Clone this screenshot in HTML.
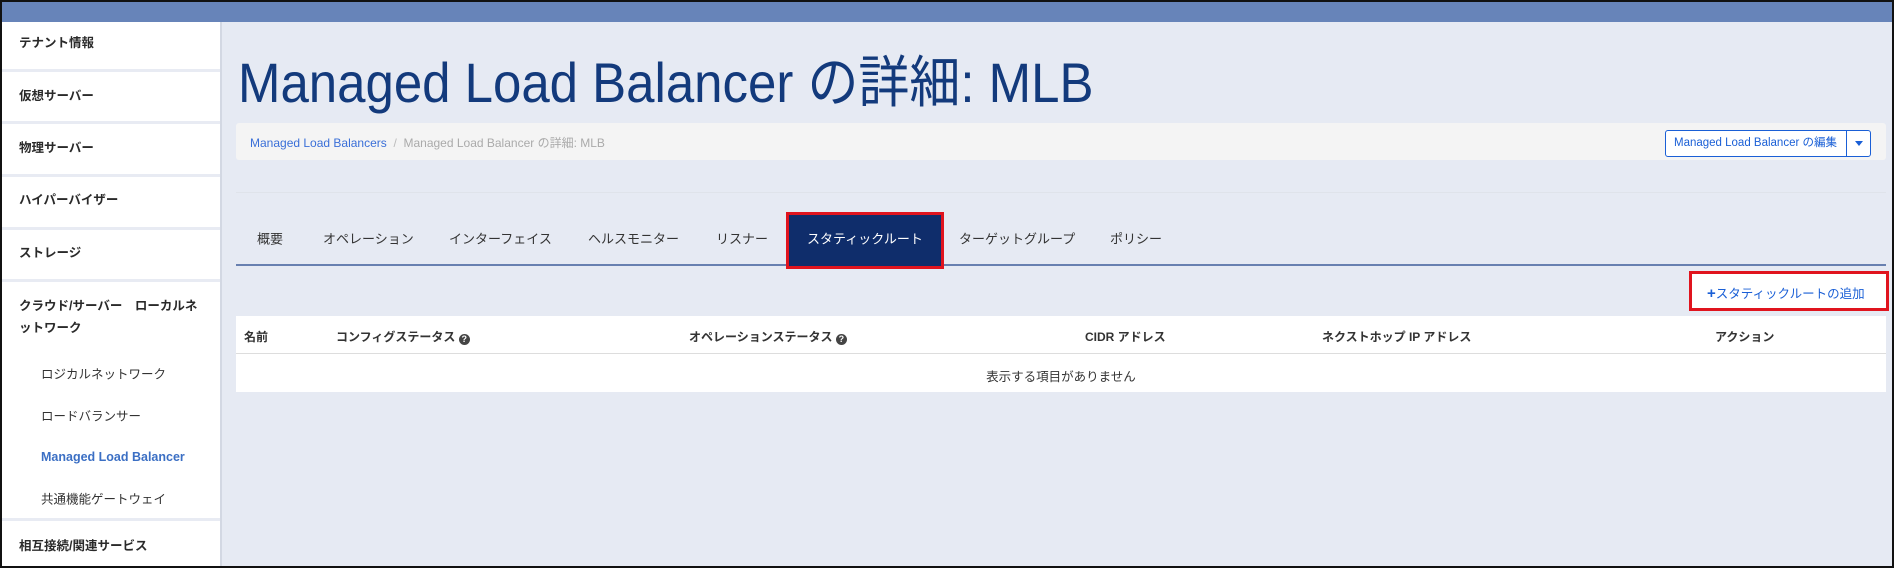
<!DOCTYPE html>
<html><head><meta charset="utf-8"><style>
*{margin:0;padding:0;box-sizing:border-box}
body{width:1894px;height:568px;overflow:hidden;background:#e6eaf3;font-family:"Liberation Sans","Noto Sans CJK JP",sans-serif;position:relative}
.frame{position:absolute;left:0;top:0;width:1894px;height:568px;border:2px solid #111;z-index:10;pointer-events:none}
.top{position:absolute;left:0;top:0;width:1894px;height:22px;background:#6784b9}
.side{position:absolute;left:0;top:22px;width:222px;height:546px;background:#fff;border-right:2px solid #d3d8e3}
.a{position:absolute;left:19px;font-size:12.5px;color:#2a2a2a;font-weight:bold;transform:translateY(-50%);line-height:22px}
.s{position:absolute;left:41px;font-size:12.5px;color:#333;transform:translateY(-50%)}
.sep{position:absolute;left:0;width:220px;height:3px;background:#e8ebf3}
.abs{position:absolute}
.title{left:238px;top:38px;font-size:56px;color:#133a7c;white-space:nowrap;transform:scaleX(0.91);transform-origin:left top}
.bc{left:236px;top:123px;width:1650px;height:37px;background:#f4f4f4;border-radius:3px}
.tab{position:absolute;top:238px;font-size:13px;color:#333;transform:translateY(-50%);white-space:nowrap}
.h{position:absolute;top:328px;font-size:12px;font-weight:bold;color:#333;white-space:nowrap}
.q{display:inline-block;width:11px;height:11px;border-radius:50%;background:#444;color:#fff;font-size:9px;text-align:center;line-height:11px;vertical-align:-1px}
</style></head><body>
<div class="top"></div>
<div class="side">
<div class="a" style="top:21px">テナント情報</div>
<div class="sep" style="top:47px"></div>
<div class="a" style="top:74px">仮想サーバー</div>
<div class="sep" style="top:99px"></div>
<div class="a" style="top:126px">物理サーバー</div>
<div class="sep" style="top:152px"></div>
<div class="a" style="top:178px">ハイパーバイザー</div>
<div class="sep" style="top:205px"></div>
<div class="a" style="top:231px">ストレージ</div>
<div class="sep" style="top:257px"></div>
<div class="a" style="top:295px">クラウド/サーバー　ローカルネ<br>ットワーク</div>
<div class="s" style="top:351px">ロジカルネットワーク</div>
<div class="s" style="top:393px">ロードバランサー</div>
<div class="s" style="top:435px;color:#3b6fc4;font-weight:bold">Managed Load Balancer</div>
<div class="s" style="top:476px">共通機能ゲートウェイ</div>
<div class="sep" style="top:496px"></div>
<div class="a" style="top:524px">相互接続/関連サービス</div>
</div>
<div class="abs title">Managed Load Balancer の詳細: MLB</div>
<div class="abs bc"></div>
<div class="abs" style="left:250px;top:134px;font-size:12px;color:#3a6fd8;white-space:nowrap">Managed Load Balancers <span style="color:#bbb">&nbsp;/&nbsp;</span> <span style="color:#aaa">Managed Load Balancer の詳細: MLB</span></div>
<div class="abs" style="left:1665px;top:130px;width:206px;height:27px;border:1px solid #1a5fd6;border-radius:3px;background:#fff"></div>
<div class="abs" style="left:1846px;top:130px;width:1px;height:27px;background:#1a5fd6"></div>
<div class="abs" style="left:1665px;top:130px;width:181px;height:27px;font-size:11.5px;color:#1a5fd6;text-align:center;line-height:27px;white-space:nowrap">Managed Load Balancer の編集</div>
<div class="abs" style="left:1855px;top:141px;border-left:4px solid transparent;border-right:4px solid transparent;border-top:5px solid #1a5fd6"></div>
<div class="abs" style="left:236px;top:192px;width:1650px;height:1px;background:#dfe3ea"></div>
<div class="abs" style="left:236px;top:264px;width:1650px;height:2px;background:#6880b0"></div>
<div class="abs" style="left:786px;top:212px;width:158px;height:57px;border:3px solid #e0141e;background:#0f2d6b"></div>
<div class="tab" style="left:257px">概要</div>
<div class="tab" style="left:323px">オペレーション</div>
<div class="tab" style="left:449px">インターフェイス</div>
<div class="tab" style="left:588px">ヘルスモニター</div>
<div class="tab" style="left:716px">リスナー</div>
<div class="tab" style="left:807px;color:#fff">スタティックルート</div>
<div class="tab" style="left:959px">ターゲットグループ</div>
<div class="tab" style="left:1110px">ポリシー</div>
<div class="abs" style="left:1689px;top:271px;width:200px;height:40px;border:3px solid #e0141e;background:#fff"></div>
<div class="abs" style="left:1707px;top:283px;font-size:12.5px;color:#1a5fd6;white-space:nowrap"><b style="font-size:15px">+</b>スタティックルートの追加</div>
<div class="abs" style="left:236px;top:316px;width:1650px;height:76px;background:#fff"></div>
<div class="abs" style="left:236px;top:353px;width:1650px;height:1px;background:#ddd"></div>
<div class="h" style="left:244px">名前</div>
<div class="h" style="left:336px">コンフィグステータス <span class="q">?</span></div>
<div class="h" style="left:689px">オペレーションステータス <span class="q">?</span></div>
<div class="h" style="left:1085px">CIDR アドレス</div>
<div class="h" style="left:1322px">ネクストホップ IP アドレス</div>
<div class="h" style="left:1715px">アクション</div>
<div class="abs" style="top:366px;left:236px;width:1650px;text-align:center;font-size:12.5px;color:#333">表示する項目がありません</div>
<div class="frame"></div>
</body></html>
